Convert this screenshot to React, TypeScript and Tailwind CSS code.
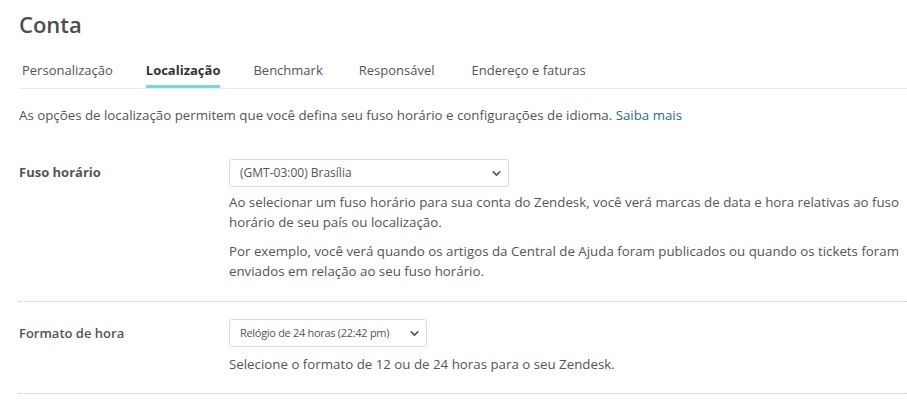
import { ChevronDown } from 'lucide-react';

const tabs = [
  { label: 'Personalização', gap: 'ml-0' },
  { label: 'Localização', gap: 'ml-[33px]' },
  { label: 'Benchmark', gap: 'ml-[33px]' },
  { label: 'Responsável', gap: 'ml-[36px]' },
  { label: 'Endereço e faturas', gap: 'ml-[37px]' },
];

function Select({ value, width, size }: { value: string; width: string; size: string }) {
  return (
    <div
      className={`${width} h-[28px] flex items-center justify-between border border-[#d8dcde] rounded-[3px] bg-white pl-[10px] pr-[5px] ${size} whitespace-nowrap text-[#555]`}
    >
      <span>{value}</span>
      <ChevronDown size={13} strokeWidth={3} className="text-[#555] shrink-0" />
    </div>
  );
}

export default function App() {
  return (
    <div className="w-[907px] h-[408px] bg-white overflow-hidden text-[#555] font-['Open_Sans',sans-serif]">
      <div className="pl-[19px] pt-[9px]">
        <h1 className="text-[22px] font-semibold text-[#4d4d4d] leading-[30px]">Conta</h1>

        {/* Tabs */}
        <div className="mt-[22px] flex pl-[3px] border-b border-[#e9ebed] text-[13px]">
          {tabs.map((tab) => (
            <div
              key={tab.label}
              className={`${tab.gap} pb-[5px] border-b-[3px] leading-[19px] ${
                tab.label === 'Localização' ? 'border-[#78d9d5] font-bold text-[#333]' : 'border-transparent'
              }`}
            >
              {tab.label}
            </div>
          ))}
        </div>

        <p className="mt-[16px] text-[13.3px] leading-[20px]">
          As opções de localização permitem que você defina seu fuso horário e configurações de idioma.{' '}
          <span className="text-[#1f6f8b]">Saiba mais</span>
        </p>

        {/* Fuso horário */}
        <div className="mt-[34px] flex pb-[20px] border-b border-dotted border-[#c8c8c8]">
          <div className="w-[210px] shrink-0 pt-[3px] text-[13px] font-bold leading-[20px]">Fuso horário</div>
          <div className="flex-1 pr-[6px] text-[13.3px] leading-[20px]">
            <Select value="(GMT-03:00) Brasília" width="w-[280px]" size="text-[12px]" />
            <p className="mt-[5px]">
              Ao selecionar um fuso horário para sua conta do Zendesk, você verá marcas de data e hora relativas ao
              fuso horário de seu país ou localização.
            </p>
            <p className="mt-[9px]">
              Por exemplo, você verá quando os artigos da Central de Ajuda foram publicados ou quando os tickets foram
              enviados em relação ao seu fuso horário.
            </p>
          </div>
        </div>

        {/* Formato de hora */}
        <div className="mt-[17px] flex pb-[19px] border-b border-dotted border-[#c8c8c8]">
          <div className="w-[210px] shrink-0 pt-[4px] text-[13px] font-semibold leading-[20px]">Formato de hora</div>
          <div className="flex-1 text-[13.3px] leading-[20px]">
            <Select value="Relógio de 24 horas (22:42 pm)" width="w-[198px]" size="text-[11px] tracking-[-0.3px]" />
            <p className="mt-[7px]">Selecione o formato de 12 ou de 24 horas para o seu Zendesk.</p>
          </div>
        </div>
      </div>
    </div>
  );
}
